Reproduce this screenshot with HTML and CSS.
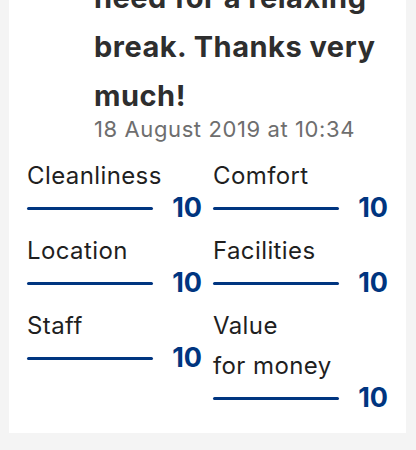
FILE: index.html
```html
<!DOCTYPE html>
<html lang="en">
<head>
<meta charset="utf-8">
<title>Review</title>
<link rel="stylesheet" href="styles.css">
</head>
<body>
  <article class="card">
    <div class="review">
      <h2 class="review-title">need for a relaxing<br>break. Thanks very<br>much!</h2>
      <p class="review-date">18 August 2019 at 10:34</p>
    </div>
    <ul class="scores">
      <li class="score">
        <span class="score-label">Cleanliness</span>
        <div class="score-row"><span class="score-bar"></span><span class="score-value">10</span></div>
      </li>
      <li class="score">
        <span class="score-label">Comfort</span>
        <div class="score-row"><span class="score-bar"></span><span class="score-value">10</span></div>
      </li>
      <li class="score">
        <span class="score-label">Location</span>
        <div class="score-row"><span class="score-bar"></span><span class="score-value">10</span></div>
      </li>
      <li class="score">
        <span class="score-label">Facilities</span>
        <div class="score-row"><span class="score-bar"></span><span class="score-value">10</span></div>
      </li>
      <li class="score">
        <span class="score-label">Staff</span>
        <div class="score-row"><span class="score-bar"></span><span class="score-value">10</span></div>
      </li>
      <li class="score">
        <span class="score-label">Value<br>for money</span>
        <div class="score-row"><span class="score-bar"></span><span class="score-value">10</span></div>
      </li>
    </ul>
  </article>
</body>
</html>
```
FILE: styles.css
```css
html, body {
  margin: 0;
  padding: 0;
}

body {
  background: #f4f4f4;
  font-family: Inter, "Noto Sans", "Liberation Sans", sans-serif;
  color: #1f1f1f;
  overflow: hidden;
}

.card {
  background: #ffffff;
  margin: -27px 10px 0 9px;
  padding: 0 18px 23px 18px;
}

.review {
  padding-left: 67px;
}

.review-title {
  margin: 0;
  font-size: 29px;
  line-height: 49px;
  font-weight: 700;
  letter-spacing: 0.5px;
  color: #2e2e2e;
}

.review-date {
  margin: -2px 0 0 0;
  font-size: 22px;
  line-height: 22px;
  letter-spacing: 0.6px;
  color: #6e6e6e;
}

.scores {
  list-style: none;
  margin: 16px 0 0 0;
  padding: 0;
  display: grid;
  grid-template-columns: 1fr 1fr;
  column-gap: 11px;
  row-gap: 11px;
  align-items: start;
}

.score {
  display: flex;
  flex-direction: column;
}

.score-label {
  font-size: 24px;
  line-height: 40px;
  letter-spacing: 0.4px;
  color: #1f1f1f;
}

.score-row {
  display: flex;
  align-items: center;
  height: 24px;
}

.score-bar {
  flex: 1;
  height: 3px;
  border-radius: 2px;
  background: #003580;
}

.score-value {
  margin-left: 19px;
  font-size: 27px;
  line-height: 24px;
  font-weight: 700;
  color: #003580;
}
```
